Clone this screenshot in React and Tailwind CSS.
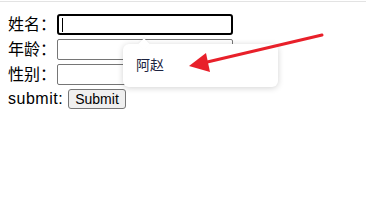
const FIELDS = ['姓名：', '年龄：', '性别：']

const App = () => {
  return (
    <div
      className="relative w-[366px] h-[210px] bg-white text-black overflow-hidden"
      style={{ fontFamily: '"Liberation Sans", "Noto Sans CJK SC", sans-serif' }}
    >
      {/* top divider */}
      <div className="h-px mt-px bg-[#e3e3e3]" />

      <div className="pl-2 pt-[10px] text-[16px] leading-none">
        {FIELDS.map((label, i) => (
          <div key={label} className="flex items-center h-[25px]">
            <span className="w-[49px]">{label}</span>
            {i === 0 ? (
              <div className="w-[176px] h-[21px] border-2 border-black rounded-[3px] flex items-center pl-[3px]">
                <div className="w-px h-[14px] bg-black" />
              </div>
            ) : (
              <div className="w-[176px] h-[21px] border border-[#767676] rounded-[2px] bg-white" />
            )}
          </div>
        ))}
        <div className="flex items-center h-[23px]">
          <span className="w-[60px] tracking-[0.5px]">submit:</span>
          <button className="h-[20px] w-[58px] text-[14px] leading-none bg-[#efefef] border border-[#767676] rounded-[3px]">
            Submit
          </button>
        </div>
      </div>

      {/* tooltip */}
      <div className="absolute left-[123px] top-[44px] w-[155px] h-[43px] bg-white rounded-[6px] shadow-[0_1px_6px_rgba(0,0,0,0.18)] flex items-center pl-[13px]">
        <div className="absolute -top-[4px] left-[17px] w-[8px] h-[8px] bg-white rotate-45 shadow-[-1px_-1px_2px_rgba(0,0,0,0.05)]" />
        <span className="relative text-[14px] text-[#1c2340]">阿赵</span>
      </div>

      {/* red annotation arrow */}
      <svg className="absolute left-0 top-0" width="366" height="210" viewBox="0 0 366 210">
        <line x1="322" y1="35" x2="203" y2="63" stroke="#e8202a" strokeWidth="3" strokeLinecap="round" />
        <polygon points="189,66 206,53 210,72" fill="#e8202a" />
      </svg>
    </div>
  )
}

export default App
